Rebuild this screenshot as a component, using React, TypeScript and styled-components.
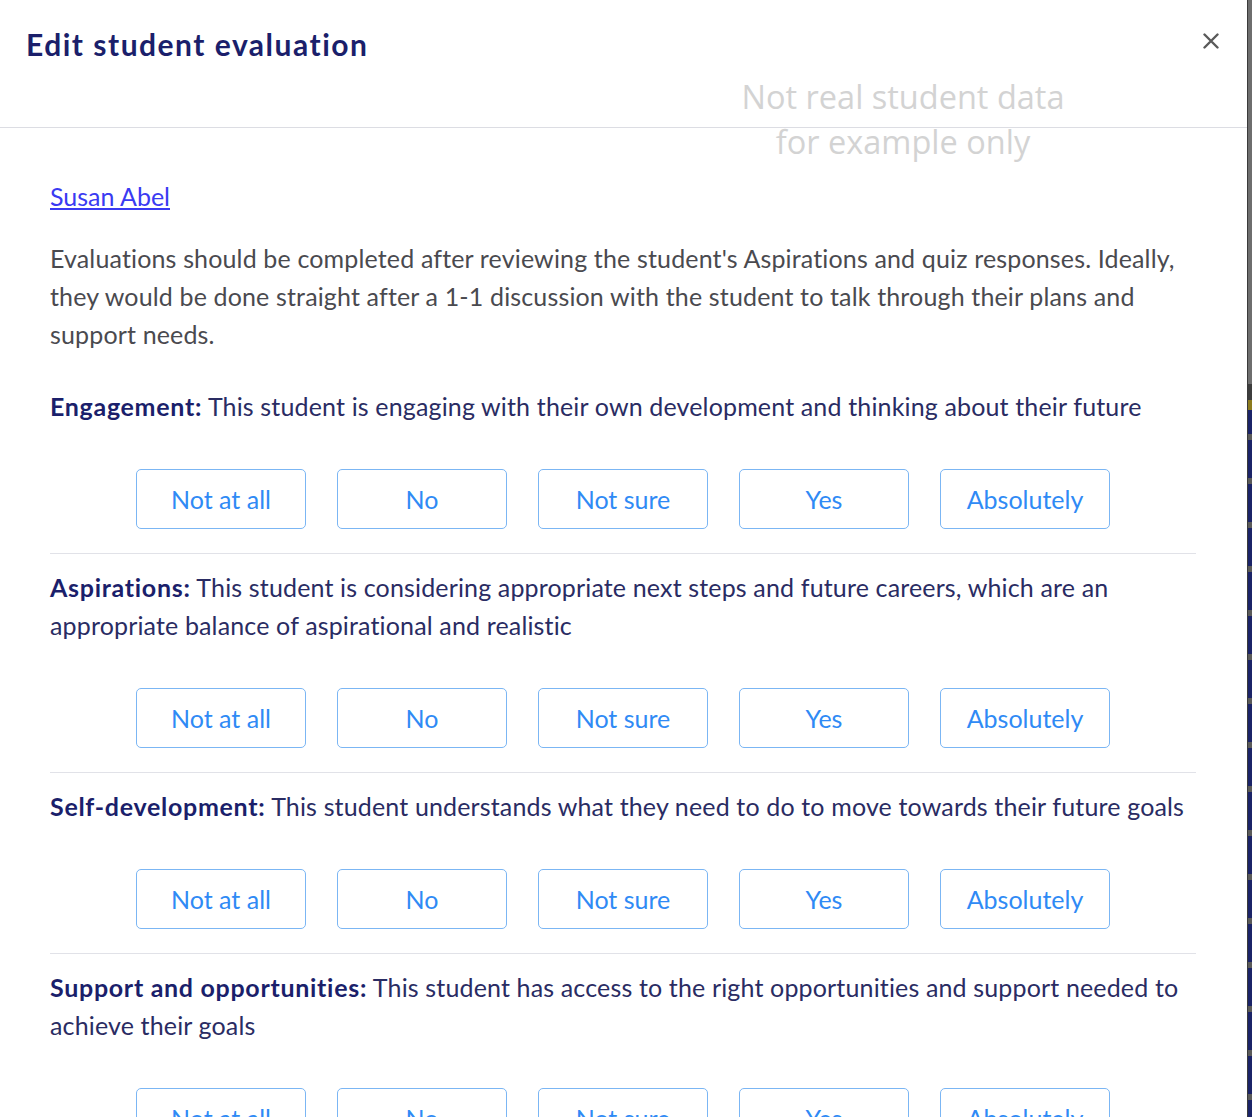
import React from 'react';
import styled, { createGlobalStyle } from 'styled-components';

const GlobalStyle = createGlobalStyle`
  html, body {
    margin: 0;
    padding: 0;
    height: 100%;
    overflow: hidden;
    background: #ffffff;
  }
  #root {
    height: 100%;
  }
`;

const Page = styled.div`
  display: flex;
  height: 1117px;
  font-family: "Lato", "Noto Sans", sans-serif;
`;

const Modal = styled.div`
  position: relative;
  flex: 1;
  background: #ffffff;
  overflow: hidden;
`;

const Backdrop = styled.div`
  width: 4px;
  border-left: 1px solid #3a3a3a;
  background:
    linear-gradient(to bottom, #6e6e6e 0, #6e6e6e 384px, #3d3d3d 384px, #3d3d3d 400px, #8c7b1e 400px, #8c7b1e 410px, transparent 410px),
    repeating-linear-gradient(to bottom, #1b2468 0, #1b2468 38px, #5a5a5a 38px, #5a5a5a 44px);
`;

const Header = styled.div`
  display: flex;
  align-items: flex-start;
  justify-content: space-between;
  height: 128px;
  box-sizing: border-box;
  padding: 24px 28px 0 26px;
  border-bottom: 1px solid #dcdde3;
`;

const Title = styled.h1`
  margin: 0;
  font-size: 30px;
  font-weight: 700;
  letter-spacing: 1.5px;
  color: #1b1f6b;
  line-height: 40px;
`;

const Close = styled.button`
  border: none;
  background: none;
  padding: 0;
  margin-top: 9px;
  cursor: pointer;
  color: #5a5a5a;
  display: flex;
`;

const Watermark = styled.div`
  position: absolute;
  left: 713px;
  top: 74px;
  width: 380px;
  text-align: center;
  font-family: "Open Sans", "Liberation Sans", sans-serif;
  font-size: 32.5px;
  line-height: 45px;
  color: #d3d3d3;
  pointer-events: none;
`;

const Body = styled.div`
  padding: 49px 51px 0 50px;
`;

const StudentLink = styled.a`
  display: inline-block;
  font-size: 25px;
  line-height: 38px;
  color: #3a3af2;
  text-decoration: underline;
`;

const Intro = styled.p`
  margin: 24px 0 34px;
  font-size: 25px;
  letter-spacing: 0.15px;
  line-height: 38px;
  color: #4a4a4f;
`;

const Section = styled.div<{ $first?: boolean }>`
  padding-top: ${(p) => (p.$first ? '0' : '14px')};
  padding-bottom: 24px;
  border-bottom: 1px solid #e1e2e8;
`;

const Question = styled.p`
  margin: 0;
  font-size: 25px;
  letter-spacing: 0.15px;
  line-height: 38px;
  color: #2a2c63;

  strong {
    color: #1b1f6b;
    font-weight: 700;
    letter-spacing: 0.7px;
  }
`;

const Options = styled.div`
  display: flex;
  justify-content: center;
  gap: 31px;
  margin-top: 44px;
`;

const Option = styled.button`
  width: 170px;
  height: 60px;
  box-sizing: border-box;
  border: 1px solid #7bb6f4;
  border-radius: 5px;
  background: #ffffff;
  color: #2f8af5;
  font-family: "Lato", "Noto Sans", sans-serif;
  font-size: 25px;
  cursor: pointer;
`;

const choices = ['Not at all', 'No', 'Not sure', 'Yes', 'Absolutely'];

const questions = [
  {
    label: 'Engagement:',
    text: 'This student is engaging with their own development and thinking about their future',
  },
  {
    label: 'Aspirations:',
    text: 'This student is considering appropriate next steps and future careers, which are an appropriate balance of aspirational and realistic',
  },
  {
    label: 'Self-development:',
    text: 'This student understands what they need to do to move towards their future goals',
  },
  {
    label: 'Support and opportunities:',
    text: 'This student has access to the right opportunities and support needed to achieve their goals',
  },
];

export default function App() {
  return (
    <Page>
      <GlobalStyle />
      <Modal>
        <Header>
          <Title>Edit student evaluation</Title>
          <Close aria-label="Close">
            <svg width="16" height="16" viewBox="0 0 16 16">
              <path d="M1.5 1.5 L14.5 14.5 M14.5 1.5 L1.5 14.5" stroke="currentColor" strokeWidth="2.4" strokeLinecap="round" />
            </svg>
          </Close>
        </Header>
        <Watermark>
          Not real student data
          <br />
          for example only
        </Watermark>
        <Body>
          <StudentLink href="#">Susan Abel</StudentLink>
          <Intro>
            Evaluations should be completed after reviewing the student's Aspirations and quiz responses. Ideally,
            they would be done straight after a 1-1 discussion with the student to talk through their plans and
            support needs.
          </Intro>
          {questions.map((q, i) => (
            <Section key={q.label} $first={i === 0}>
              <Question>
                <strong>{q.label}</strong> {q.text}
              </Question>
              <Options>
                {choices.map((c) => (
                  <Option key={c}>{c}</Option>
                ))}
              </Options>
            </Section>
          ))}
        </Body>
      </Modal>
      <Backdrop />
    </Page>
  );
}
